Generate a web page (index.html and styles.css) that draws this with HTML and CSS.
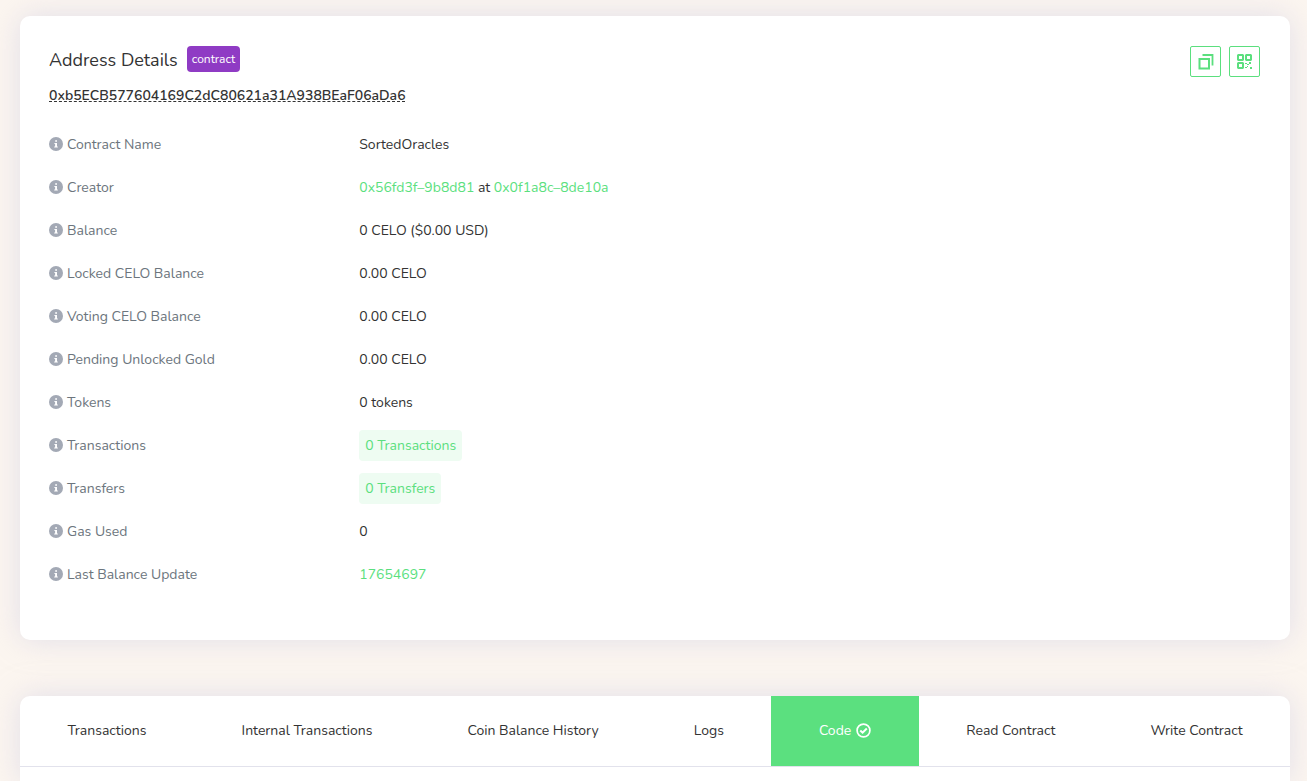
FILE: index.html
```html
<!DOCTYPE html>
<html lang="en">
<head>
<meta charset="utf-8">
<meta name="viewport" content="width=device-width, initial-scale=1">
<title>Address Details</title>
<link rel="stylesheet" href="styles.css">
</head>
<body>
<svg class="sprite" aria-hidden="true">
  <symbol id="info" viewBox="0 0 14 14">
    <circle cx="7" cy="7" r="7" fill="#a3a9b5"/>
    <path fill="#fff" d="M6.2 3.2h1.8v1.6H6.2zM5.4 6H8v3.6h.8v1H5.2v-1h.9V7h-.7z"/>
  </symbol>
</svg>
<main class="page">
  <section class="card details">
    <header class="head">
      <h1 class="title">Address Details <span class="tag">contract</span></h1>
      <div class="actions">
        <button class="action" type="button" aria-label="Copy address">
          <svg width="17" height="17" viewBox="0 0 17 17" fill="none" stroke="#5bdf7e" stroke-width="2"><path d="M2.5 6h9.5v9.5H2.500z"/><path d="M5.500 2H15.500v10.500" stroke-width="1.800"/></svg>
        </button>
        <button class="action" type="button" aria-label="Show QR code">
          <svg width="15" height="15" viewBox="0 0 15 15" fill="#5bdf7e"><path fill-rule="evenodd" d="M1 0h5l1 1v5l-1 1H1L0 6V1zM2 2v3h3V2zM9 0h5l1 1v5l-1 1H9L8 6V1zM10 2v3h3V2zM1 8h5l1 1v5l-1 1H1l-1-1V9zM2 10v3h3v-3z"/><path d="M8 9h2v1H8zM12 8h2v2h-2zM10 10h2v1h-2zM8 13h2v1H8zM10 12h1v1h-1zM13 13h2v2h-2z"/></svg>
        </button>
      </div>
    </header>
    <h2 class="address"><abbr class="hash" title="Contract address">0xb5ECB577604169C2dC80621a31A938BEaF06aDa6</abbr></h2>
    <dl class="list">
      <div class="row"><dt class="label"><svg class="info"><use href="#info"/></svg>Contract Name</dt><dd class="value">SortedOracles</dd></div>
      <div class="row"><dt class="label"><svg class="info"><use href="#info"/></svg>Creator</dt><dd class="value"><a class="link" href="#">0x56fd3f–9b8d81</a> at <a class="link" href="#">0x0f1a8c–8de10a</a></dd></div>
      <div class="row"><dt class="label"><svg class="info"><use href="#info"/></svg>Balance</dt><dd class="value">0 CELO ($0.00 USD)</dd></div>
      <div class="row"><dt class="label"><svg class="info"><use href="#info"/></svg>Locked CELO Balance</dt><dd class="value">0.00 CELO</dd></div>
      <div class="row"><dt class="label"><svg class="info"><use href="#info"/></svg>Voting CELO Balance</dt><dd class="value">0.00 CELO</dd></div>
      <div class="row"><dt class="label"><svg class="info"><use href="#info"/></svg>Pending Unlocked Gold</dt><dd class="value">0.00 CELO</dd></div>
      <div class="row"><dt class="label"><svg class="info"><use href="#info"/></svg>Tokens</dt><dd class="value">0 tokens</dd></div>
      <div class="row"><dt class="label"><svg class="info"><use href="#info"/></svg>Transactions</dt><dd class="value"><a class="link pill" href="#">0 Transactions</a></dd></div>
      <div class="row"><dt class="label"><svg class="info"><use href="#info"/></svg>Transfers</dt><dd class="value"><a class="link pill" href="#">0 Transfers</a></dd></div>
      <div class="row"><dt class="label"><svg class="info"><use href="#info"/></svg>Gas Used</dt><dd class="value">0</dd></div>
      <div class="row"><dt class="label"><svg class="info"><use href="#info"/></svg>Last Balance Update</dt><dd class="value"><a class="link" href="#">17654697</a></dd></div>
    </dl>
  </section>
  <section class="card panel">
    <nav class="tabs">
      <a class="tab" href="#">Transactions</a>
      <a class="tab" href="#">Internal Transactions</a>
      <a class="tab" href="#">Coin Balance History</a>
      <a class="tab" href="#">Logs</a>
      <a class="tab active" href="#" aria-current="page">Code
        <svg width="15" height="15" viewBox="0 0 15 15" fill="none" stroke="#fff" stroke-width="2"><circle cx="7.5" cy="7.5" r="6.4" stroke-width="1.7"/><path d="M4.3 7.5l2.3 2.2 4.2-4.2"/></svg>
      </a>
      <a class="tab" href="#">Read Contract</a>
      <a class="tab" href="#">Write Contract</a>
    </nav>
  </section>
</main>
</body>
</html>
```
FILE: styles.css
```css
* {
  box-sizing: border-box;
}

body {
  margin: 0;
  background: #fcf6f0;
  color: #333;
  font-family: Nunito, Roboto, "Open Sans", sans-serif;
  font-size: 14px;
  line-height: 21px;
}

.sprite {
  display: none;
}

.page {
  display: flex;
  flex-direction: column;
  gap: 56px;
  min-height: 100vh;
  padding: 16px 17px 0 20px;
}

.card {
  border-radius: 10px;
  background: #fff;
  box-shadow: 0 0 30px rgba(202, 199, 226, 0.5);
}

.details {
  padding: 30px 30px 38px 29px;
}

.head {
  display: flex;
  justify-content: space-between;
  align-items: flex-start;
  height: 31px;
}

.title {
  display: flex;
  align-items: center;
  gap: 9px;
  margin: 0;
  font-size: 18px;
  font-weight: 400;
  line-height: 28px;
}

.tag {
  align-self: flex-start;
  padding: 0 5px;
  border-radius: 4px;
  background: #8f3bc4;
  color: #fff;
  font-size: 12px;
  line-height: 26px;
}

.actions {
  display: flex;
  gap: 8px;
}

.action {
  display: flex;
  align-items: center;
  justify-content: center;
  width: 31px;
  height: 31px;
  padding: 0;
  border: 1px solid #5bdf7e;
  border-radius: 2px;
  background: #fff;
}

.address {
  margin: 8px 0 23px;
  font-size: 14px;
  font-weight: 600;
  line-height: 21px;
}

.hash {
  text-decoration: underline dashed 1px;
  text-decoration-skip-ink: none;
  text-underline-offset: 1px;
}

.list {
  display: flex;
  flex-direction: column;
  gap: 12px;
  margin: 0;
  padding-bottom: 12px;
}

.row {
  display: flex;
  margin: 0 -15px;
}

.label {
  display: flex;
  align-items: flex-start;
  gap: 4px;
  flex: 0 0 25%;
  padding: 5px 15px;
  color: #6c757d;
}

.info {
  width: 14px;
  height: 14px;
  margin-top: 3px;
}

.value {
  flex: 1;
  margin: 0;
  padding: 5px 15px;
}

.link {
  color: #5bdf7e;
  text-decoration: none;
}

.pill {
  display: inline-block;
  margin: -5px 0;
  padding: 5px 6px;
  border-radius: 4px;
  background: #eefcf2;
}

.panel {
  flex: 1;
  overflow: hidden;
  border-radius: 10px 10px 0 0;
}

.tabs {
  display: flex;
  border-bottom: 1px solid #e2e2ec;
}

.tab {
  display: flex;
  flex: 1 1 auto;
  align-items: center;
  justify-content: center;
  gap: 5px;
  height: 70px;
  padding-bottom: 1px;
  color: #333;
  text-decoration: none;
}

.active {
  background: #5be07f;
  color: #fff;
}
```
